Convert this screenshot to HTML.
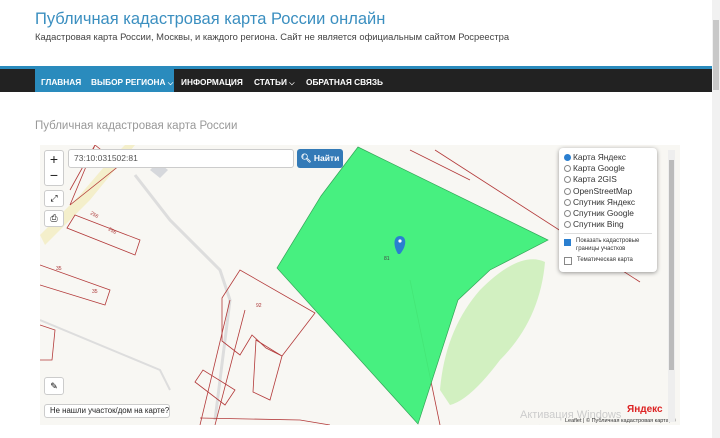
<!DOCTYPE html>
<html><head><meta charset="utf-8"><style>
body{margin:0;width:720px;height:438px;overflow:hidden;background:#fff;font-family:"Liberation Sans",sans-serif;position:relative}
.t{position:absolute;white-space:nowrap}
.nav{position:absolute;left:0;top:66px;width:712px;height:26px;background:#222;border-top:3px solid #2a8bbd;box-sizing:border-box}
.nav span{position:absolute;top:8px;color:#fff;font-size:8.3px;font-weight:bold;white-space:nowrap}
.btn{position:absolute;background:#fff;border:1px solid #ccc;border-radius:3px;box-sizing:border-box;text-align:center;white-space:nowrap}
.lay div{font-size:8.4px;color:#333;height:11.2px;line-height:11px;white-space:nowrap}
.lay i{display:inline-block;width:7px;height:7px;border:1px solid #888;border-radius:50%;vertical-align:-1px;margin-right:2px;box-sizing:border-box}
</style></head><body>
<div class="t" style="left:35px;top:10px;font-size:16.5px;color:#3b8fc0">Публичная кадастровая карта России онлайн</div>
<div class="t" style="left:35px;top:31px;font-size:9.4px;color:#444">Кадастровая карта России, Москвы, и каждого региона. Сайт не является официальным сайтом Росреестра</div>
<div class="nav">
<div style="position:absolute;left:35px;top:0;width:139px;height:23px;background:#2a8bbd"></div>
<span style="left:41px">ГЛАВНАЯ</span><span style="left:91px">ВЫБОР РЕГИОНА <small>⌵</small></span><span style="left:181px">ИНФОРМАЦИЯ</span><span style="left:254px">СТАТЬИ <small>⌵</small></span><span style="left:306px">ОБРАТНАЯ СВЯЗЬ</span>
</div>
<div style="position:absolute;right:0;top:0;width:8px;height:438px;background:#f1f1f1"></div>
<div style="position:absolute;right:1px;top:20px;width:6px;height:70px;background:#c8c8c8"></div>
<div class="t" style="left:35px;top:120px;font-size:11.5px;color:#999">Публичная кадастровая карта России</div>
<svg style="position:absolute;left:40px;top:145px" width="640" height="280" viewBox="40 145 640 280">
<rect x="40" y="145" width="640" height="280" fill="#f8f7f3"/>
<path d="M40 235 L80 195 L110 160 L125 145 L135 145 L90 200 L45 245Z" fill="#f3ecc0" opacity=".8"/>
<path d="M150 170 L158 162 L168 170 L160 178Z" fill="#d6d8dc"/>
<path d="M135 175 L170 220 L220 270 L230 300 L215 420" stroke="#ddd" stroke-width="3" fill="none"/>
<path d="M40 320 L160 370 L170 390" stroke="#ddd" stroke-width="2" fill="none"/>
<g fill="none" stroke="#b33a3a" stroke-width=".8">
<path d="M70 190 L95 145 M95 145 L120 165 L70 205 Z"/>
<path d="M67 228 L75 215 L140 240 L135 255Z"/>
<path d="M40 265 L110 290 L105 305 L40 285"/>
<path d="M222 298 L240 270 L315 313 L282 356 L266 348 L252 335 L240 355 L222 341Z"/>
<path d="M256 340 L282 356 L270 400 L253 392Z"/>
<path d="M195 382 L203 370 L235 390 L225 405Z"/>
<path d="M40 325 L55 330 L52 360 L40 360"/>
<path d="M230 300 L200 425 M245 310 L215 425"/>
<path d="M410 150 L470 180 M435 150 L640 282"/>
<path d="M410 280 L440 425"/>
<path d="M200 418 L300 420 L330 425"/>
</g>
<path d="M440 390 Q445 330 480 290 Q520 250 545 262 Q540 320 500 360 Q470 400 450 405Z" fill="#cdeebb" opacity=".9"/>
<path d="M358 147 L548 240 L490 270 L458 300 L418 424 L277 268 L321 196Z" fill="#3ef07a" stroke="#2aa050" stroke-width=".7" opacity=".95"/>
<text x="90" y="214" font-size="5" fill="#a33" transform="rotate(30 90 214)">256</text>
<text x="108" y="230" font-size="5" fill="#a33" transform="rotate(30 108 230)">256</text>
<text x="56" y="270" font-size="5" fill="#a33">35</text>
<text x="92" y="293" font-size="5" fill="#a33">35</text>
<text x="256" y="307" font-size="5" fill="#a33">92</text>
<text x="384" y="260" font-size="5" fill="#444">81</text>
<path d="M398 254 C393 246 393 236 400 236 C407 236 407 246 400 254Z" fill="#2a7fd0"/>
<circle cx="400" cy="241" r="1.6" fill="#fff"/>
<text x="627" y="412" font-size="10" fill="#d22" font-weight="bold">Яндекс</text>
<text x="520" y="418" font-size="11" fill="#ccc">Активация Windows</text>
<text x="520" y="432" font-size="9" fill="#ccc">Чтобы активировать Windows, перейдите в</text>
<text x="565" y="422" font-size="5.5" fill="#333">Leaflet | © Публичная кадастровая карта, ©</text>
<rect x="668" y="150" width="7" height="272" fill="#eee"/>
<rect x="669" y="160" width="5" height="210" fill="#bbb"/>
</svg>
<div class="btn" style="left:44px;top:150px;width:20px;height:36px;font-size:14px;line-height:16px;color:#222">+<br>−</div>
<div class="btn" style="left:44px;top:190px;width:20px;height:17px;font-size:9px;line-height:15px">⤢</div>
<div class="btn" style="left:44px;top:210px;width:20px;height:17px;font-size:9px;line-height:15px">⎙</div>
<div class="btn" style="left:44px;top:377px;width:20px;height:18px;font-size:9px;line-height:16px">✎</div>
<div class="btn" style="left:44px;top:404px;width:126px;height:14px;font-size:7.8px;line-height:12px;text-align:left;padding-left:5px;color:#222">Не нашли участок/дом на карте?</div>
<div class="btn" style="left:68px;top:149px;width:226px;height:19px;text-align:left;font-size:8.5px;line-height:17px;padding-left:5px;color:#555">73:10:031502:81</div>
<div style="position:absolute;left:297px;top:149px;width:46px;height:19px;background:#337ab7;border-radius:3px;color:#fff;font-size:8.5px;line-height:19px;text-align:center;font-weight:bold">&#x1F50D;︎ Найти</div>
<div class="lay" style="position:absolute;left:559px;top:148px;width:98px;height:124px;background:#fff;border-radius:4px;box-shadow:0 1px 4px rgba(0,0,0,.4);box-sizing:border-box;padding:4px 5px">
<div><i style="background:#2a7fd0;border-color:#2a7fd0"></i>Карта Яндекс</div><div><i></i>Карта Google</div><div><i></i>Карта 2GIS</div><div><i></i>OpenStreetMap</div><div><i></i>Спутник Яндекс</div><div><i></i>Спутник Google</div><div><i></i>Спутник Bing</div>
<div style="border-top:1px solid #ddd;margin-top:3px;padding-top:3px;font-size:6px;line-height:8px;height:auto;white-space:normal;display:flex"><b style="display:inline-block;width:7px;height:7px;background:#2a7fd0;margin:2px 5px 0 0;flex:none"></b>Показать кадастровые границы участков</div>
<div style="font-size:6px;line-height:10px;display:flex;margin-top:2px"><b style="display:inline-block;width:6px;height:6px;border:1px solid #888;margin:2px 5px 0 0;flex:none"></b>Тематическая карта</div>
</div>
</body></html>
